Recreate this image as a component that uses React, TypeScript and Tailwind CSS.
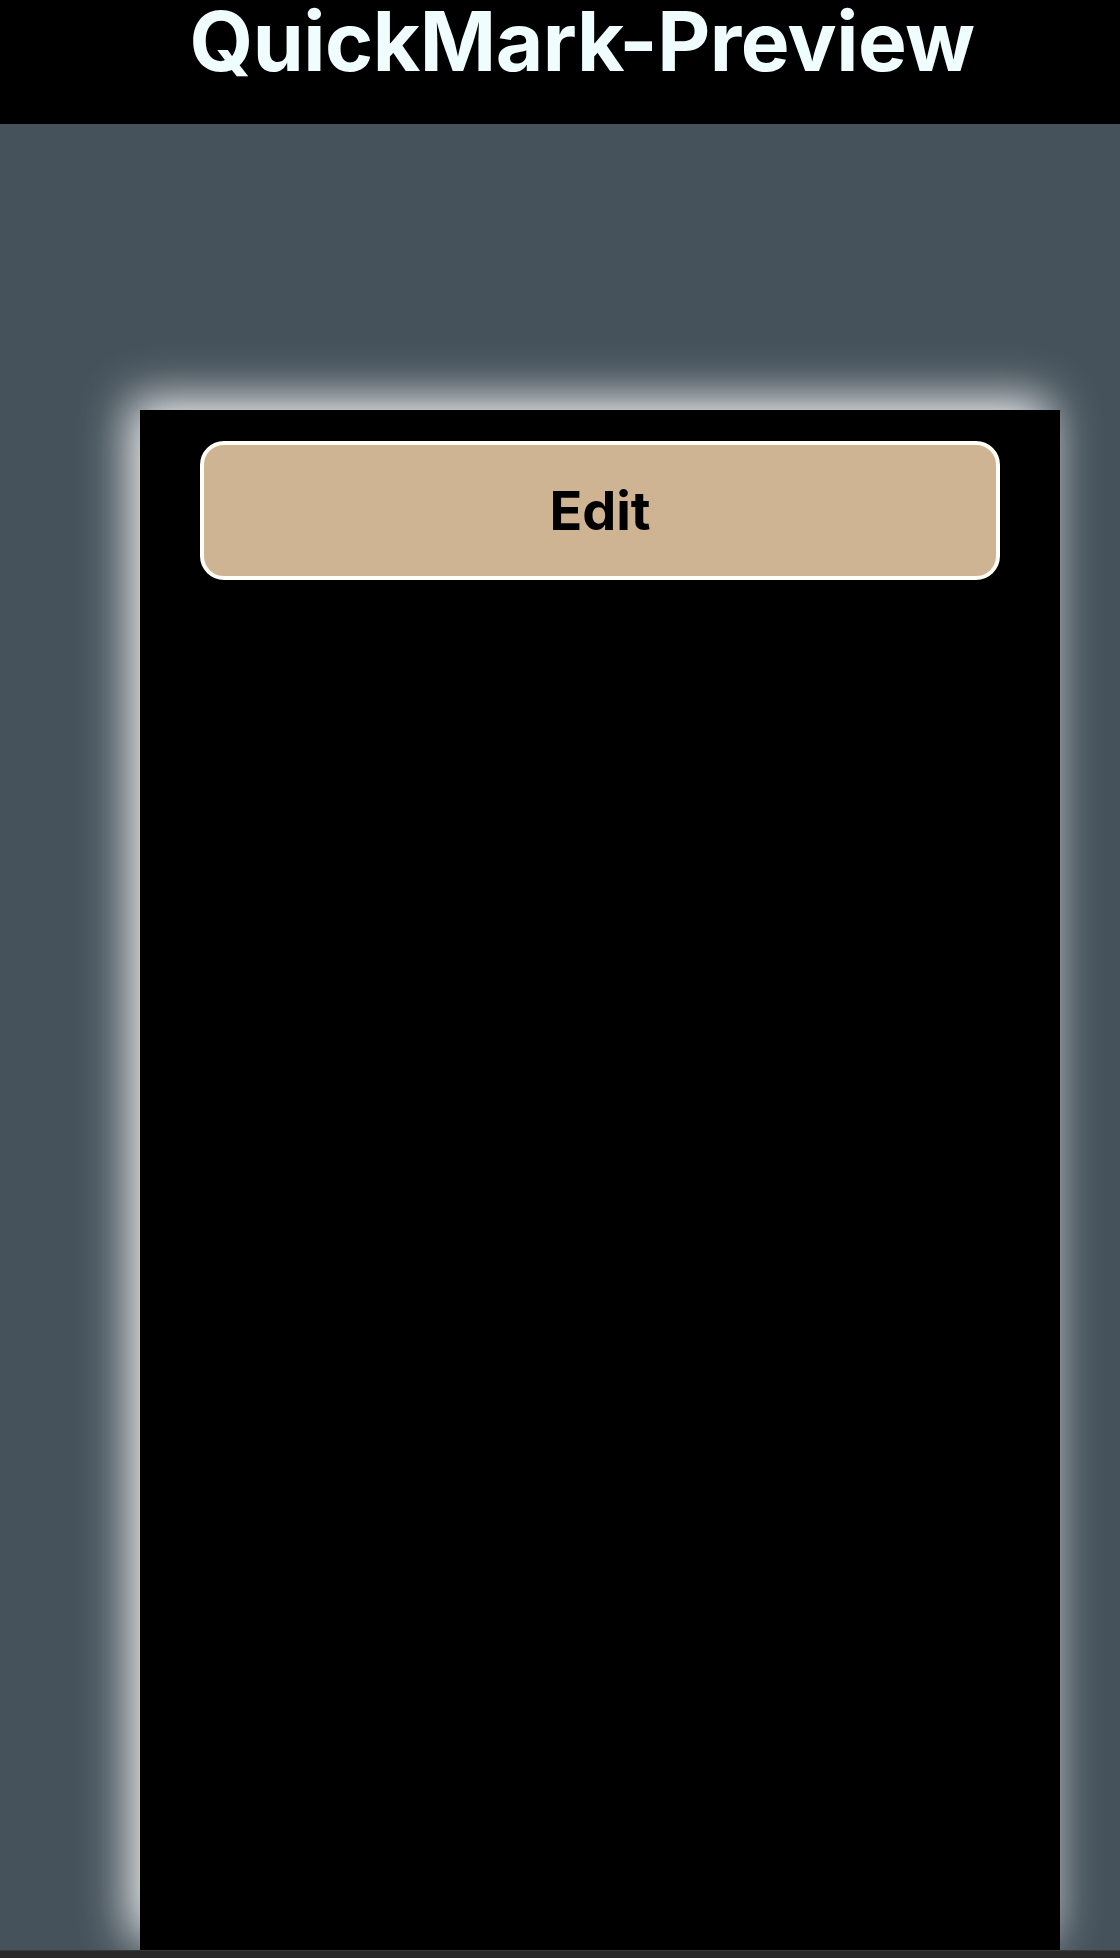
export default function App() {
  return (
    <div className="flex min-h-[1958px] w-full flex-col bg-[#45525b] font-['Inter','Noto_Sans',sans-serif]">
      <header className="flex h-[124px] shrink-0 items-start justify-center bg-black pl-[44px] pt-px">
        <h1 className="text-[82px] font-bold leading-[82px] tracking-[-0.5px] text-[#f0fdff]">
          QuickMark-Preview
        </h1>
      </header>

      <main className="flex flex-1 pl-[140px] pt-[286px]">
        <section className="flex w-[920px] flex-col items-center bg-black pt-[31px] shadow-[-10px_-10px_45px_rgba(255,255,255,0.95)]">
          <button
            type="button"
            className="flex h-[139px] w-[800px] items-center justify-center rounded-[24px] border-4 border-[#fffdf6] bg-[#ceb492] text-[54px] font-bold text-black"
          >
            Edit
          </button>
        </section>
      </main>

      <footer className="h-[8px] shrink-0 border-t border-[#3a3b3c] bg-[#27292b]" />
    </div>
  );
}
